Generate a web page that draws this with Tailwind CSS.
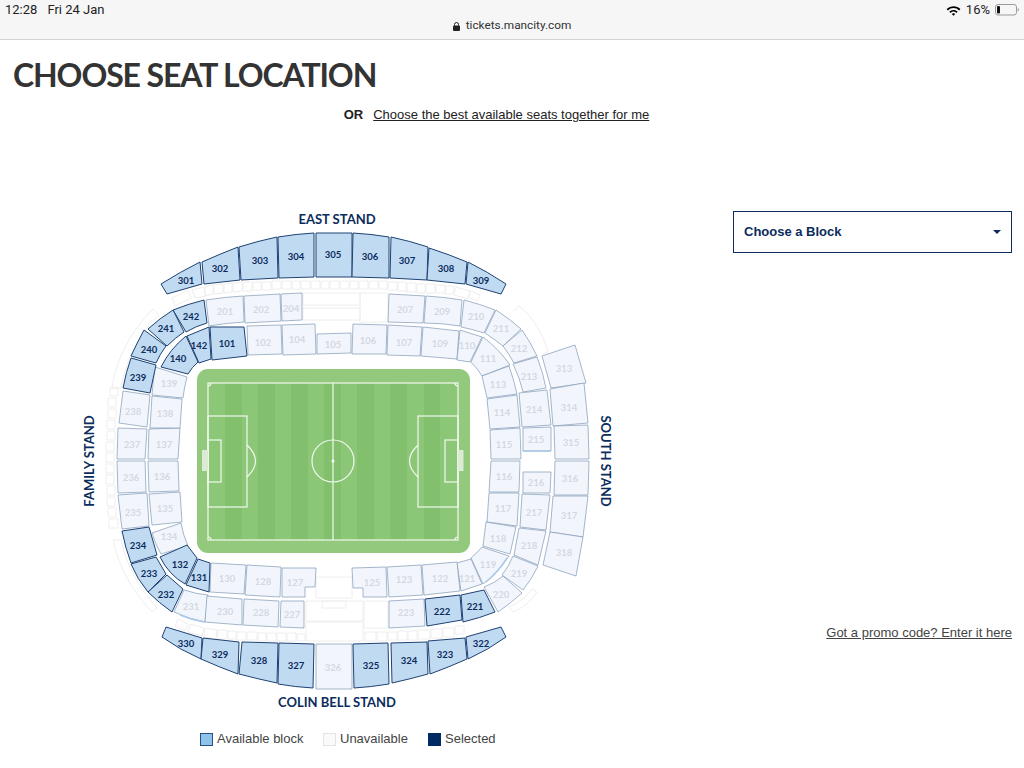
<!DOCTYPE html>
<html lang="en">
<head>
    <meta charset="UTF-8">
    <meta name="viewport" content="width=device-width, initial-scale=1.0">
    <title>Choose Seat Location</title>
    <script src="https://cdn.jsdelivr.net/npm/@tailwindcss/browser@4"></script>
</head>
<body class="bg-white">
<div class="w-[1024px] h-[768px] overflow-hidden font-['Liberation_Sans',sans-serif]">
    <!-- Browser bar -->
    <header class="h-10 px-[5px] bg-[#f6f6f7] border-b border-[#d2d2d2] flex flex-col font-['Roboto',sans-serif] text-[#222]">
        <div class="h-5 flex items-center justify-between text-[13px]">
            <div class="flex gap-[10px]"><span>12:28</span><span>Fri 24 Jan</span></div>
            <div class="flex items-center gap-[5px]">
                <svg width="15" height="11" viewBox="0 0 15 11" class="fill-black"><path d="M7.5 1.2c2.6 0 5 1 6.9 2.8l-1.3 1.4a8 8 0 0 0-11.2 0L.6 4a10 10 0 0 1 6.9-2.8z"/><path d="M7.5 4.9c1.6 0 3 .6 4.2 1.7l-1.3 1.3a4.2 4.2 0 0 0-5.8 0L3.3 6.6a6 6 0 0 1 4.2-1.7z"/><path d="M7.5 8.2c.7 0 1.3.3 1.7.7l-1.7 1.8-1.7-1.8c.4-.4 1-.7 1.7-.7z"/></svg>
                <span>16%</span>
                <svg width="24" height="12" viewBox="0 0 24 12"><rect x=".5" y=".5" width="21" height="10.5" rx="2.5" fill="none" stroke="#9a9a9a"/><rect x="2" y="2" width="3" height="7.5" rx="1" fill="#111"/><path d="M22.7 4v3.5c.7-.2 1.2-1 1.2-1.8s-.5-1.500-1.200-1.700z" fill="#9a9a9a"/></svg>
            </div>
        </div>
        <div class="h-3 flex items-center justify-center gap-[6px] text-[11.800px] text-[#333]">
            <svg width="7" height="9" viewBox="0 0 7 9" class="fill-[#222]"><rect x="0" y="3.500" width="7" height="5.500" rx="1"/><path d="M1.500 3.800V2.500a2 2 0 0 1 4 0v1.300" fill="none" stroke="#222" stroke-width="1"/></svg>
            <span>tickets.mancity.com</span>
        </div>
    </header>

    <main class="px-[13px]">
        <h1 class="pt-[15px] text-[32px] leading-[40px] font-bold font-['Lato',sans-serif] text-[#333] tracking-[-1.1px]">CHOOSE SEAT LOCATION</h1>
        <p class="mt-[10px] h-5 flex items-center justify-center gap-[10px] text-[13px] leading-5 text-[#222] pr-[31px]">
            <span class="font-bold">OR</span>
            <a class="underline">Choose the best available seats together for me</a>
        </p>

        <div class="mt-[75px] flex -ml-[13px]">
            <!-- Stadium map -->
            <div class="w-[733px] shrink-0">
                <svg width="620" height="520" viewBox="0 200 620 520" class="block">
                    <!-- Faint concourse structures -->
                    <g class="fill-none stroke-[#eeeeee] stroke-[1]">
                        <path d="M303 293h57v12h-57zM303 308h57v12h-57zM360 293h28v29h-28zM306 601h57v20h-57zM322 601h24v7h-24zM364 601h24v27h-24zM306 622h57v19h-57z"/>
                        <path d="M316 577h36v21h-36z"/>
                        <path d="M205 287l8-2v9l-8 2zM214 285l9-1v9l-9 1zM224 284l8-1v9l-8 1zM233 283l9-1v9l-9 1zM243 282l9 0v9l-9 0zM253 282l8 0v8l-8 0zM262 282l9 0v8l-9 0zM272 281h9v8h-9zM282 281h9v8h-9zM292 281h8v8h-8zM301 281h9v8h-9zM311 281h9v8h-9zM321 281h8v8h-8zM330 281h9v8h-9zM340 281h9v8h-9zM350 281h8v8h-8zM359 281h9v8h-9zM369 281h9v8h-9zM379 281h8v8h-8zM388 282h9v8h-9zM398 282h8v9h-8zM407 283h9v9h-9zM417 284h8v9h-8zM426 284h9v9h-9zM436 285h9l0 8h-9zM446 286h8l-1 8h-8z"/>
                        <path d="M172 298l16-8 3 8-16 8zM192 290l12-3 2 9-11 2zM456 287l14 4-2 8-14-4zM471 291l9 4-3 6-9-4z"/>
                        <path d="M178 619l10 5-3 7-10-5zM190 624l14 4-2 8-14-4zM205 628l12 2-1 9-12-2zM218 630h9v9h-9zM228 631h8v8h-8zM237 632h9v8h-9zM247 632h10v8h-10zM258 633h8v8h-8zM267 633h9v8h-9zM277 633h9v8h-9zM287 633h9v8h-9zM297 634h8v7h-8z"/>
                        <path d="M365 632h11v9h-11zM377 632h10v9h-10zM388 632h9v8h-9zM398 631h9v9h-9zM408 631h9v9h-9zM418 630h12v9h-12zM431 629h11v9h-11zM443 628h11v9h-11zM455 626h9v8h-9z"/>
                        <path d="M112 388c4-30 20-58 41-79l6 6c-22 21-33 46-38 73zM513 311l6-5c14 11 24 28 29 46l-6 2"/>
                        <path d="M113 540c6 28 20 52 39 72l5-4c-18-20-30-42-36-68zM513 612l-4-5c10-4 17-10 23-18l5 3c-6 9-14 16-24 20z"/>
                        <path d="M110 388h8v8h-8zM108 398h8v9h-8zM108 409h8v9h-8zM107 420h8v9h-8zM107 431h8v9h-8zM106 442h8v9h-8zM106 453h8v9h-8zM106 464h8v9h-8zM106 475h8v9h-8zM107 486h8v9h-8zM107 497h8v9h-8zM108 508h8v9h-8zM109 519h9v9h-9z"/>
                    </g>

                    <!-- Unavailable blocks -->
                    <g class="fill-[#f2f6fc] stroke-[#7f98b6] stroke-[0.7]">
                        <path d="M206 300Q225 297 243 296L244 322Q226 323 209 326Z"/>
                        <path d="M244 296L280 294L281 321L245 323Z"/>
                        <path d="M281 294L302 293L302 320L282 321Z"/>
                        <path d="M389 294L425 296L423 323L388 322Z"/>
                        <path d="M426 296Q444 297 462 300L460 326Q442 323 424 323Z"/>
                        <path d="M464 300Q480 304 495 310L484 333Q472 329 461 327Z"/>
                        <path d="M496 310Q510 319 521 329L503 346Q494 339 485 333Z"/>
                        <path d="M522 330Q531 343 537 356L514 363Q509 354 503 346Z"/>
                        <path d="M537 357Q543 372 546 388L523 392Q520 378 513 364Z"/>
                        <path d="M519 393L547 390L551 425L522 427Z"/>
                        <path d="M523 428L551 427L551 451L523 451Z"/>
                        <path d="M523 472L551 472L550 493L523 493Z"/>
                        <path d="M522 494L550 495L546 530L520 527Z"/>
                        <path d="M519 528L546 531L538 565L514 555Z"/>
                        <path d="M513 556L538 566Q532 579 523 590L502 575Q509 566 513 556Z"/>
                        <path d="M503 576L522 593Q511 603 498 612L484 587Q495 583 503 576Z"/>
                        <path d="M389 601L424 599L425 626L389 628Z"/>
                        <path d="M247 326L281 325L282 354L248 355Z"/>
                        <path d="M282 325L315 324L316 354L283 355Z"/>
                        <path d="M317 334L351 333L351 353L317 354Z"/>
                        <path d="M353 324L387 325L386 354L352 354Z"/>
                        <path d="M388 325L422 327L420 356L387 355Z"/>
                        <path d="M423 327L459 331L457 359L421 356Z"/>
                        <path d="M460 330L482 337L470 362L457 360Z"/>
                        <path d="M483 337Q499 349 510 365L482 376Q478 369 471 362Z"/>
                        <path d="M482 376L509 366Q514 380 517 394L487 398Z"/>
                        <path d="M487 399L517 395L520 427L490 429Z"/>
                        <path d="M490 430L520 428L521 459L491 459Z"/>
                        <path d="M491 461L520 461L519 492L489 492Z"/>
                        <path d="M489 493L519 493L517 526L487 522Z"/>
                        <path d="M486 522L516 527L510 554L483 546Z"/>
                        <path d="M482 547L509 556Q498 573 483 584L471 558Q477 553 482 547Z"/>
                        <path d="M457 563L471 559L482 584L461 591Z"/>
                        <path d="M422 565L457 562L460 591L424 595Z"/>
                        <path d="M387 567L421 565L423 595L389 597Z"/>
                        <path d="M352 568L386 567L387 597L363 597L363 588L353 588Z"/>
                        <path d="M282 568L316 568L315 587L305 587L305 597L282 597Z"/>
                        <path d="M247 565L281 567L280 597L245 595Z"/>
                        <path d="M211 563L246 565L244 594L210 592Z"/>
                        <path d="M152 533L181 523Q183 535 188 546L161 554Q155 544 152 533Z"/>
                        <path d="M149 494L180 492L182 522L152 525Z"/>
                        <path d="M148 461L178 461L179 491L149 492Z"/>
                        <path d="M149 429L180 428L178 459L148 459Z"/>
                        <path d="M152 396L182 399L180 428L150 428Z"/>
                        <path d="M155 367L187 377Q184 388 183 398L152 395Q153 381 155 367Z"/>
                        <path d="M123 391L150 395L147 427L119 423Z"/>
                        <path d="M118 428L147 429L145 459L117 459Z"/>
                        <path d="M117 461L145 461L146 492L118 493Z"/>
                        <path d="M118 495L147 493L149 526L122 529Z"/>
                        <path d="M174 612L184 590Q196 594 208 595L205 622Q189 619 174 612Z"/>
                        <path d="M207 596L242 599L242 625L205 622Z"/>
                        <path d="M244 599L279 601L278 627L243 625Z"/>
                        <path d="M281 601L304 601L304 628L280 627Z"/>
                        <path d="M316 644L352 644L352 689L316 689Z"/>
                        <path d="M542 356L575 345L586 383L551 388Z"/>
                        <path d="M550 389L584 383L588 423L553 426Z"/>
                        <path d="M554 426L588 425L589 459L555 459Z"/>
                        <path d="M555 461L589 461L588 495L554 495Z"/>
                        <path d="M553 496L588 496L583 537L550 532Z"/>
                        <path d="M550 532L583 537L576 576L543 565Z"/>
                    </g>
                    <!-- Blue edges left on part-sold blocks -->
                    <g class="fill-none stroke-[#a9c9ea] stroke-[1.5]">
                        <path d="M523 451H551"/>
                        <path d="M486 582Q499 571 507 558"/>
                        <path d="M180 615Q192 620 204 622"/>
                    </g>

                    <!-- Available blocks -->
                    <g class="fill-[#c0daf2] stroke-[#1f4273] stroke-[1]">
                        <path d="M161 284Q180 272 200 262L202 284L167 294Z"/>
                        <path d="M202 262Q220 254 238 247L240 280L204 284Z"/>
                        <path d="M239 247Q258 241 277 237L278 278L241 280Z"/>
                        <path d="M278 237Q296 234 314 233L314 277L279 278Z"/>
                        <path d="M316 233L352 233L352 277L316 277Z"/>
                        <path d="M353 233Q371 234 389 237L389 278L352 277Z"/>
                        <path d="M391 237Q410 241 428 247L427 280L390 278Z"/>
                        <path d="M429 248Q448 254 467 262L465 284L427 280Z"/>
                        <path d="M468 262Q488 272 506 284L501 294L466 284Z"/>
                        <path d="M173 310Q188 304 204 300L207 323Q196 326 186 332Z"/>
                        <path d="M148 329Q160 318 173 310L184 332Q175 338 167 346Z"/>
                        <path d="M131 356Q137 343 144 330L166 346Q160 354 156 363Z"/>
                        <path d="M131 358L156 365L150 393L123 388Q126 372 131 358Z"/>
                        <path d="M186 336L198 362Q192 367 188 374L161 367Q170 349 186 336Z"/>
                        <path d="M187 336L209 327L211 359L199 363Z"/>
                        <path d="M210 327L244 327L247 356L212 360Z"/>
                        <path d="M461 595L484 590L495 612Q480 618 463 622Z"/>
                        <path d="M425 599L460 595L462 620L427 626Z"/>
                        <path d="M198 559L210 563L209 592L186 585Z"/>
                        <path d="M160 557L187 545L197 558L185 584Q169 575 160 557Z"/>
                        <path d="M122 531L149 527L157 555L131 563Q125 547 122 531Z"/>
                        <path d="M131 564L156 557L166 574L148 592Q137 579 131 564Z"/>
                        <path d="M148 592L167 575L183 589L172 612Q159 603 148 592Z"/>
                        <path d="M166 627L202 638L201 659Q180 650 162 637Z"/>
                        <path d="M203 638L239 642L238 674Q219 667 201 659Z"/>
                        <path d="M242 642L278 643L277 683Q258 679 239 674Z"/>
                        <path d="M279 643L314 644L313 688Q295 687 278 684Z"/>
                        <path d="M353 644L388 643L389 684Q371 687 354 688Z"/>
                        <path d="M391 643L427 642L428 674Q410 679 392 683Z"/>
                        <path d="M428 641L465 638L467 659Q449 667 430 674Z"/>
                        <path d="M466 637L501 627L506 637Q488 650 468 659Z"/>
                    </g>

                    <!-- Pitch -->
                    <rect x="197" y="369" width="273" height="184" rx="11" class="fill-[#93c97d]"/>
                    <rect x="208" y="383" width="250" height="157" class="fill-[#8cc778]"/>
                    <g class="fill-[#82c06e]">
                        <rect x="225" y="383" width="17" height="157"/>
                        <rect x="258" y="383" width="17" height="157"/>
                        <rect x="291" y="383" width="17" height="157"/>
                        <rect x="324" y="383" width="17" height="157"/>
                        <rect x="357" y="383" width="17" height="157"/>
                        <rect x="390" y="383" width="17" height="157"/>
                        <rect x="424" y="383" width="16" height="157"/>
                    </g>
                    <g class="fill-none stroke-[#f1f8ee] stroke-[1.2]">
                        <rect x="208" y="383" width="250" height="157"/>
                        <path d="M333 383V540"/>
                        <circle cx="333" cy="461" r="21"/>
                        <rect x="208" y="416" width="39" height="91"/>
                        <rect x="208" y="440" width="13" height="42"/>
                        <rect x="418" y="416" width="40" height="91"/>
                        <rect x="445" y="440" width="13" height="42"/>
                        <path d="M247 445Q264 461 247 477M418 445Q401 461 418 477"/>
                        <path d="M208 386a3 3 0 0 0 3-3M455 383a3 3 0 0 0 3 3M208 537a3 3 0 0 1 3 3M458 537a3 3 0 0 0-3 3"/>
                    </g>
                    <circle cx="333" cy="461" r="1.500" class="fill-white"/>
                    <rect x="202" y="450" width="6" height="21" class="fill-[#dcecd4]"/>
                    <rect x="458" y="450" width="5.500" height="21" class="fill-[#dcecd4]"/>

                    <!-- Stand names -->
                    <g class="fill-[#0b2c5c] font-['Lato',sans-serif] font-bold text-[13px] tracking-[0px]" text-anchor="middle">
                        <text x="337" y="224">EAST STAND</text>
                        <text x="337" y="707">COLIN BELL STAND</text>
                        <text transform="translate(94 461) rotate(-90)">FAMILY STAND</text>
                        <text transform="translate(601 461) rotate(90)">SOUTH STAND</text>
                    </g>

                    <!-- Block numbers -->
                    <g class="fill-[#0b2c5c] font-['Lato',sans-serif] font-bold text-[9.500px]" text-anchor="middle" dominant-baseline="central">
                        <text x="186" y="280">301</text><text x="220" y="268">302</text><text x="260" y="260">303</text>
                        <text x="296" y="256">304</text><text x="333" y="254">305</text><text x="370" y="256">306</text>
                        <text x="407" y="260">307</text><text x="446" y="268">308</text><text x="481" y="280">309</text>
                        <text x="191" y="316">242</text><text x="166" y="328">241</text><text x="149" y="349">240</text>
                        <text x="138" y="377">239</text><text x="178" y="358">140</text><text x="199" y="345">142</text>
                        <text x="227" y="343">101</text><text x="475" y="606">221</text><text x="442" y="611">222</text>
                        <text x="199" y="577">131</text><text x="180" y="564">132</text><text x="138" y="545">234</text>
                        <text x="149" y="573">233</text><text x="166" y="594">232</text><text x="186" y="643">330</text>
                        <text x="220" y="654">329</text><text x="259" y="660">328</text><text x="296" y="665">327</text>
                        <text x="371" y="665">325</text><text x="409" y="660">324</text><text x="445" y="654">323</text>
                        <text x="481" y="643">322</text>
                    </g>
                    <g class="fill-[#d3d8e2] font-['Lato',sans-serif] font-bold text-[9.500px]" text-anchor="middle" dominant-baseline="central">
                        <text x="225" y="311">201</text><text x="261" y="309">202</text><text x="291" y="308">204</text>
                        <text x="405" y="309">207</text><text x="442" y="311">209</text><text x="476" y="316">210</text>
                        <text x="501" y="328">211</text><text x="519" y="348">212</text><text x="529" y="376">213</text>
                        <text x="534" y="409">214</text><text x="536" y="439">215</text><text x="536" y="482">216</text>
                        <text x="534" y="512">217</text><text x="529" y="545">218</text><text x="519" y="573">219</text>
                        <text x="501" y="594">220</text><text x="406" y="612">223</text><text x="263" y="342">102</text>
                        <text x="297" y="339">104</text><text x="333" y="344">105</text><text x="368" y="340">106</text>
                        <text x="404" y="342">107</text><text x="440" y="343">109</text><text x="467" y="345">110</text>
                        <text x="488" y="358">111</text><text x="498" y="384">113</text><text x="502" y="412">114</text>
                        <text x="504" y="444">115</text><text x="504" y="476">116</text><text x="503" y="508">117</text>
                        <text x="498" y="538">118</text><text x="488" y="564">119</text><text x="467" y="578">121</text>
                        <text x="440" y="578">122</text><text x="404" y="579">123</text><text x="372" y="582">125</text>
                        <text x="295" y="582">127</text><text x="263" y="581">128</text><text x="227" y="578">130</text>
                        <text x="169" y="536">134</text><text x="165" y="508">135</text><text x="162" y="476">136</text>
                        <text x="164" y="444">137</text><text x="165" y="413">138</text><text x="169" y="383">139</text>
                        <text x="133" y="411">238</text><text x="132" y="444">237</text><text x="131" y="477">236</text>
                        <text x="133" y="512">235</text><text x="191" y="606">231</text><text x="225" y="611">230</text>
                        <text x="261" y="612">228</text><text x="292" y="614">227</text><text x="333" y="667">326</text>
                        <text x="564" y="368">313</text><text x="569" y="407">314</text><text x="571" y="442">315</text>
                        <text x="570" y="478">316</text><text x="569" y="515">317</text><text x="564" y="552">318</text>
                    </g>
                </svg>

                <!-- Legend -->
                <div class="mt-[11px] pl-[200px] flex items-center text-[13px] leading-4 text-[#444]">
                    <span class="w-[13px] h-[13px] bg-[#8cc4ee] border border-[#2a4f80]"></span>
                    <span class="ml-[4px] w-[106px]">Available block</span>
                    <span class="w-[13px] h-[13px] bg-[#fafafa] border border-[#e4e4e4]"></span>
                    <span class="ml-[4px] w-[88px]">Unavailable</span>
                    <span class="w-[13px] h-[13px] bg-[#002a62]"></span>
                    <span class="ml-[4px]">Selected</span>
                </div>
            </div>

            <!-- Block picker -->
            <div class="w-[279px] shrink-0 pt-[11px] flex flex-col">
                <div class="h-[42px] px-[10px] border border-[#0b2c5c] flex items-center justify-between text-[13px] font-bold text-[#0b2c5c]">
                    <span>Choose a Block</span>
                    <span class="w-0 h-0 border-x-[4px] border-x-transparent border-t-[4px] border-t-[#0b2c5c]"></span>
                </div>
                <a class="mt-[372px] text-right text-[13px] leading-4 text-[#444] underline">Got a promo code? Enter it here</a>
            </div>
        </div>
    </main>
</div>
</body>
</html>
